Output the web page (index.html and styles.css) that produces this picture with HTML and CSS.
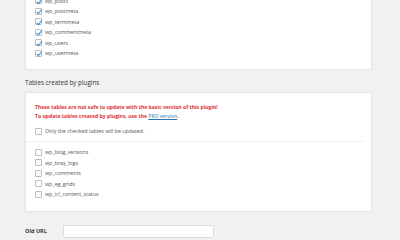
FILE: index.html
```html
<!DOCTYPE html>
<html lang="en">
<head>
  <meta charset="UTF-8" />
  <title>Search Replace - Tables</title>
  <link rel="stylesheet" href="styles.css">
</head>
<body>

  <div class="panel panel-core">
    <label class="row"><span class="box checked"></span>wp_posts</label>
    <label class="row"><span class="box checked"></span>wp_postmeta</label>
    <label class="row"><span class="box checked"></span>wp_termmeta</label>
    <label class="row"><span class="box checked"></span>wp_commentmeta</label>
    <label class="row"><span class="box checked"></span>wp_users</label>
    <label class="row"><span class="box checked"></span>wp_usermeta</label>
  </div>

  <h2 class="section-title">Tables created by plugins</h2>

  <div class="panel panel-plugins">
    <p class="warning">These tables are not safe to update with the basic version of this plugin!</p>
    <p class="warning">To update tables created by plugins, use the <a href="#">PRO version</a>.</p>
    <label class="row note"><span class="box"></span>Only the checked tables will be updated.</label>

    <div class="table-list">
      <label class="row"><span class="box"></span>wp_blog_versions</label>
      <label class="row"><span class="box"></span>wp_bray_logs</label>
      <label class="row"><span class="box"></span>wp_comments</label>
      <label class="row"><span class="box"></span>wp_eg_grids</label>
      <label class="row"><span class="box"></span>wp_icl_content_status</label>
    </div>
  </div>

  <div class="field">
    <label class="field-label">Old URL</label>
    <input class="field-input" type="text">
  </div>

</body>
</html>
```

FILE: styles.css
```css
* {
  margin: 0;
  padding: 0;
  box-sizing: border-box;
}

body {
  font-family: 'Open Sans', 'Noto Sans', sans-serif;
  font-size: 5.3px;
  background: #f1f1f1;
  color: #50575e;
  padding-left: 25px;
  width: 372px;
}

.panel {
  background: #fff;
  border: 1px solid #e6e6e6;
  box-shadow: 0 0 1px rgba(0, 0, 0, 0.05);
}

.panel-core {
  margin-top: -16px;
  padding: 10.5px 0 10.5px 9px;
}

.row {
  display: flex;
  align-items: center;
  gap: 3px;
  height: 10.5px;
}

.box {
  width: 7px;
  height: 7px;
  border: 1px solid #b8bec4;
  border-radius: 1px;
  background: #fff;
  position: relative;
  flex-shrink: 0;
}

.box.checked::after {
  content: "";
  position: absolute;
  left: 1.5px;
  top: -0.5px;
  width: 2px;
  height: 4.5px;
  border-right: 1.2px solid #2a8bd0;
  border-bottom: 1.2px solid #2a8bd0;
  transform: rotate(40deg);
}

.section-title {
  font-size: 6.3px;
  font-weight: normal;
  color: #32373c;
  padding: 8px 0 4px;
  line-height: 10px;
}

.panel-plugins {
  padding: 10px 8px 11px 9px;
}

.warning {
  color: #dc3232;
  font-size: 5.1px;
  font-weight: bold;
  line-height: 9px;
}

.warning a {
  color: #2679b0;
  font-weight: normal;
  text-decoration: underline;
}

.note {
  margin-top: 5px;
  margin-bottom: 4px;
}

.table-list {
  border-top: 1px solid #eeeeee;
  margin-left: -9px;
  padding: 5.5px 0 0 9px;
}

.field {
  display: flex;
  align-items: center;
  margin-top: 13px;
}

.field-label {
  width: 38px;
  font-size: 5.5px;
  font-weight: bold;
  color: #32373c;
}

.field-input {
  width: 151px;
  height: 13px;
  border: 1px solid #dcdcde;
  border-radius: 2px;
  background: #fff;
}
```
